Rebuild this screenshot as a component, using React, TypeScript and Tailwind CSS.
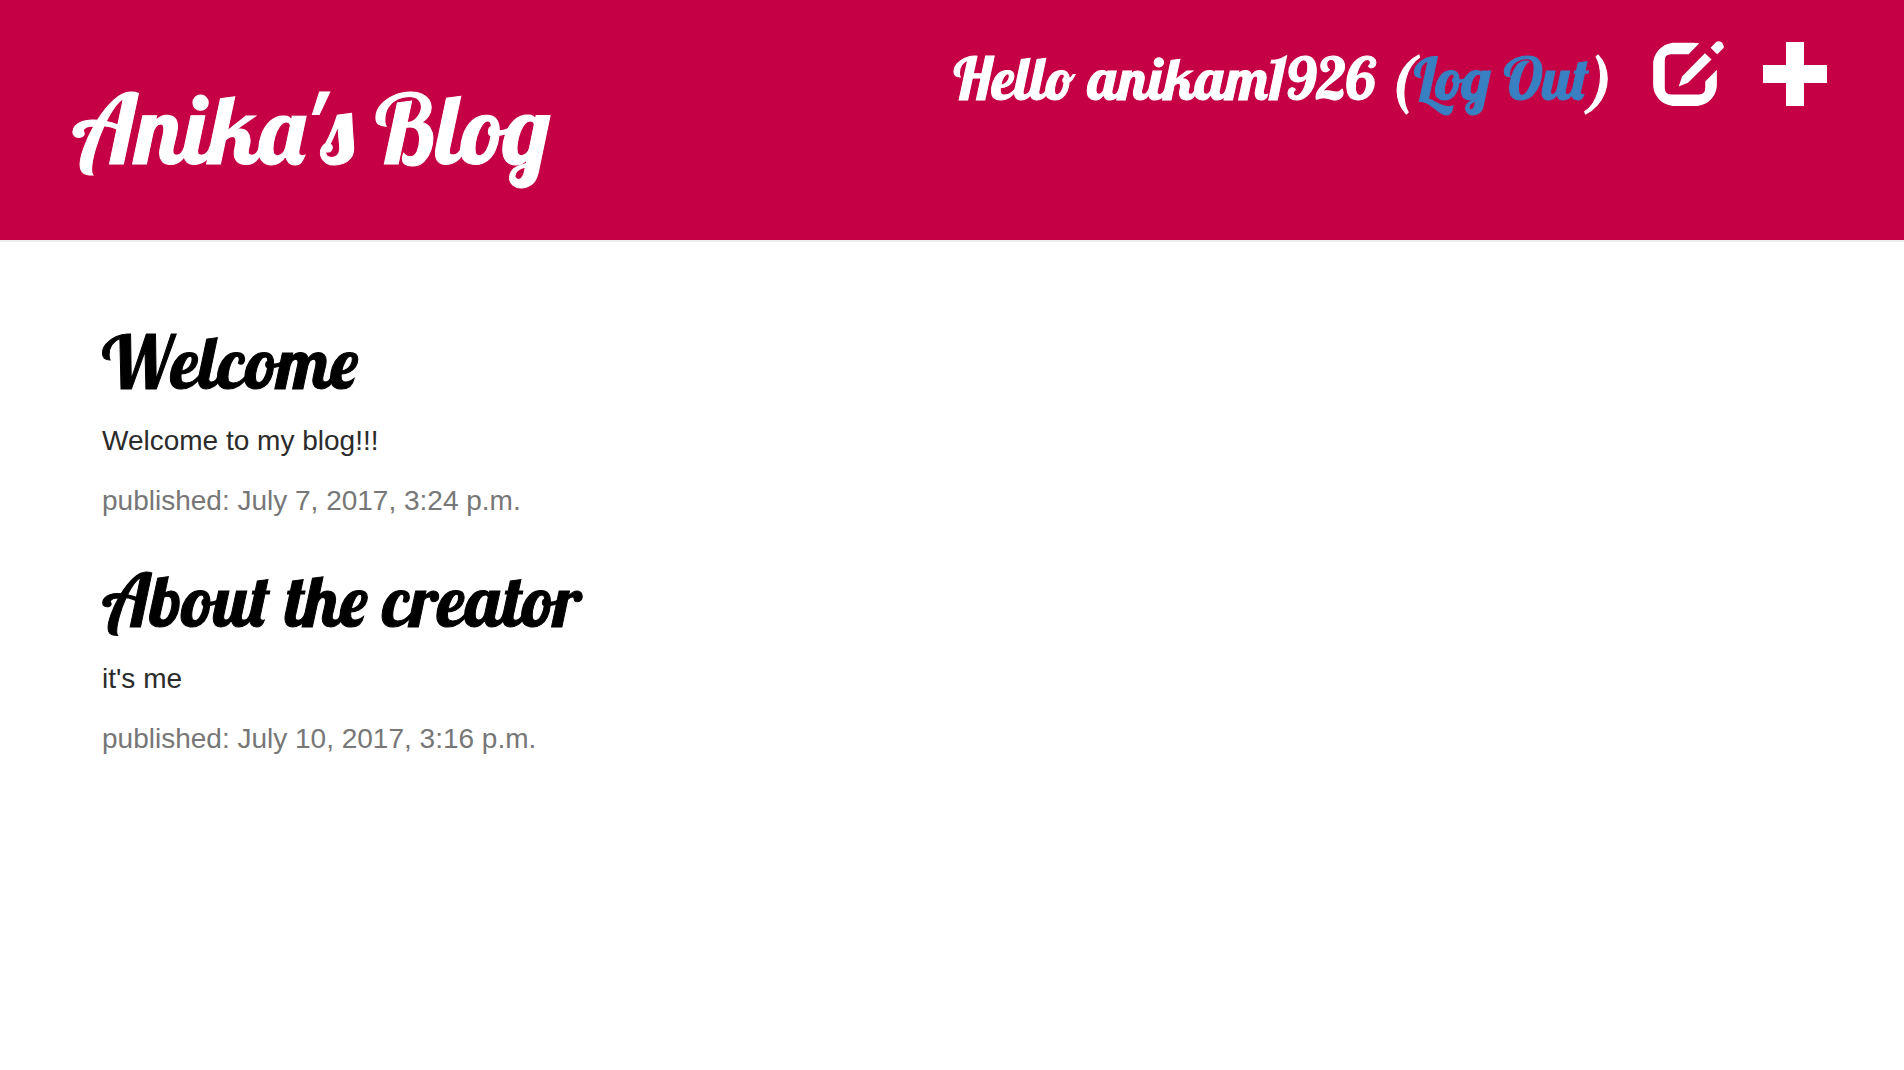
const display = "font-['Lobster','Liberation_Serif',serif] font-normal [-webkit-text-stroke:1px_currentColor]";

const posts = [
  { title: "Welcome", text: "Welcome to my blog!!!", date: "July 7, 2017, 3:24 p.m." },
  { title: "About the creator", text: "it's me", date: "July 10, 2017, 3:16 p.m." },
];

function EditIcon() {
  return (
    <svg viewBox="99 62 213 196" className="h-[65px] w-[71px]" fill="currentColor" aria-hidden="true">
      <path d="M238 69L206 102H153Q134 102 134 121V204Q134 223 153 223H237Q256 223 256 204V184L291 149V193C291 229 262 258 226 258H165C129 258 99 229 99 193V132C99 96 129 67 165 67H220Z" />
      <path d="M255 99L275 118L204 188L176 199L186 169Z" />
      <path d="M272 82L289 65Q292 62 297 63L304 65Q308 66 309 71L312 78Q313 81 309 85L292 102Z" />
    </svg>
  );
}

function PlusIcon() {
  return (
    <svg viewBox="0 0 64 64" className="size-16" fill="currentColor" aria-hidden="true">
      <path d="M23 0H41V23H64V41H41V64H23V41H0V23H23Z" />
    </svg>
  );
}

export default function App() {
  return (
    <div className="min-h-screen bg-white font-['Helvetica_Neue','Liberation_Sans',sans-serif] text-[28px] leading-10 text-[#2b2b2b]">
      <header className="flex items-start justify-between border-b-2 border-[#eeeeee] bg-[#c50045] pt-10 pr-[77px] pb-16 pl-[72px] text-white">
        <h1 className={`${display} pt-10 text-[96px] leading-24`}>
          <a href="#home">Anika's Blog</a>
        </h1>
        <div className="flex items-start">
          <p className={`${display} mr-10 text-[59px] leading-[76px] whitespace-nowrap`}>
            Hello anikam1926 (<a href="#logout" className="text-[#3880c2] [-webkit-text-stroke:1px_currentColor]">Log Out</a>)
          </p>
          <a href="#drafts" aria-label="Drafts" className="mr-[39px] pt-px">
            <EditIcon />
          </a>
          <a href="#new" aria-label="New post" className="pt-0.5">
            <PlusIcon />
          </a>
        </div>
      </header>
      <main className="flex flex-col gap-10 px-[102px] pt-[81px]">
        {posts.map((post) => (
          <article key={post.title}>
            <h2 className={`${display} mb-5 text-[72px] leading-[78px] text-black`}>
              <a href="#post">{post.title}</a>
            </h2>
            <p className="mb-5">{post.text}</p>
            <p className="text-[#777777]">published: {post.date}</p>
          </article>
        ))}
      </main>
    </div>
  );
}
